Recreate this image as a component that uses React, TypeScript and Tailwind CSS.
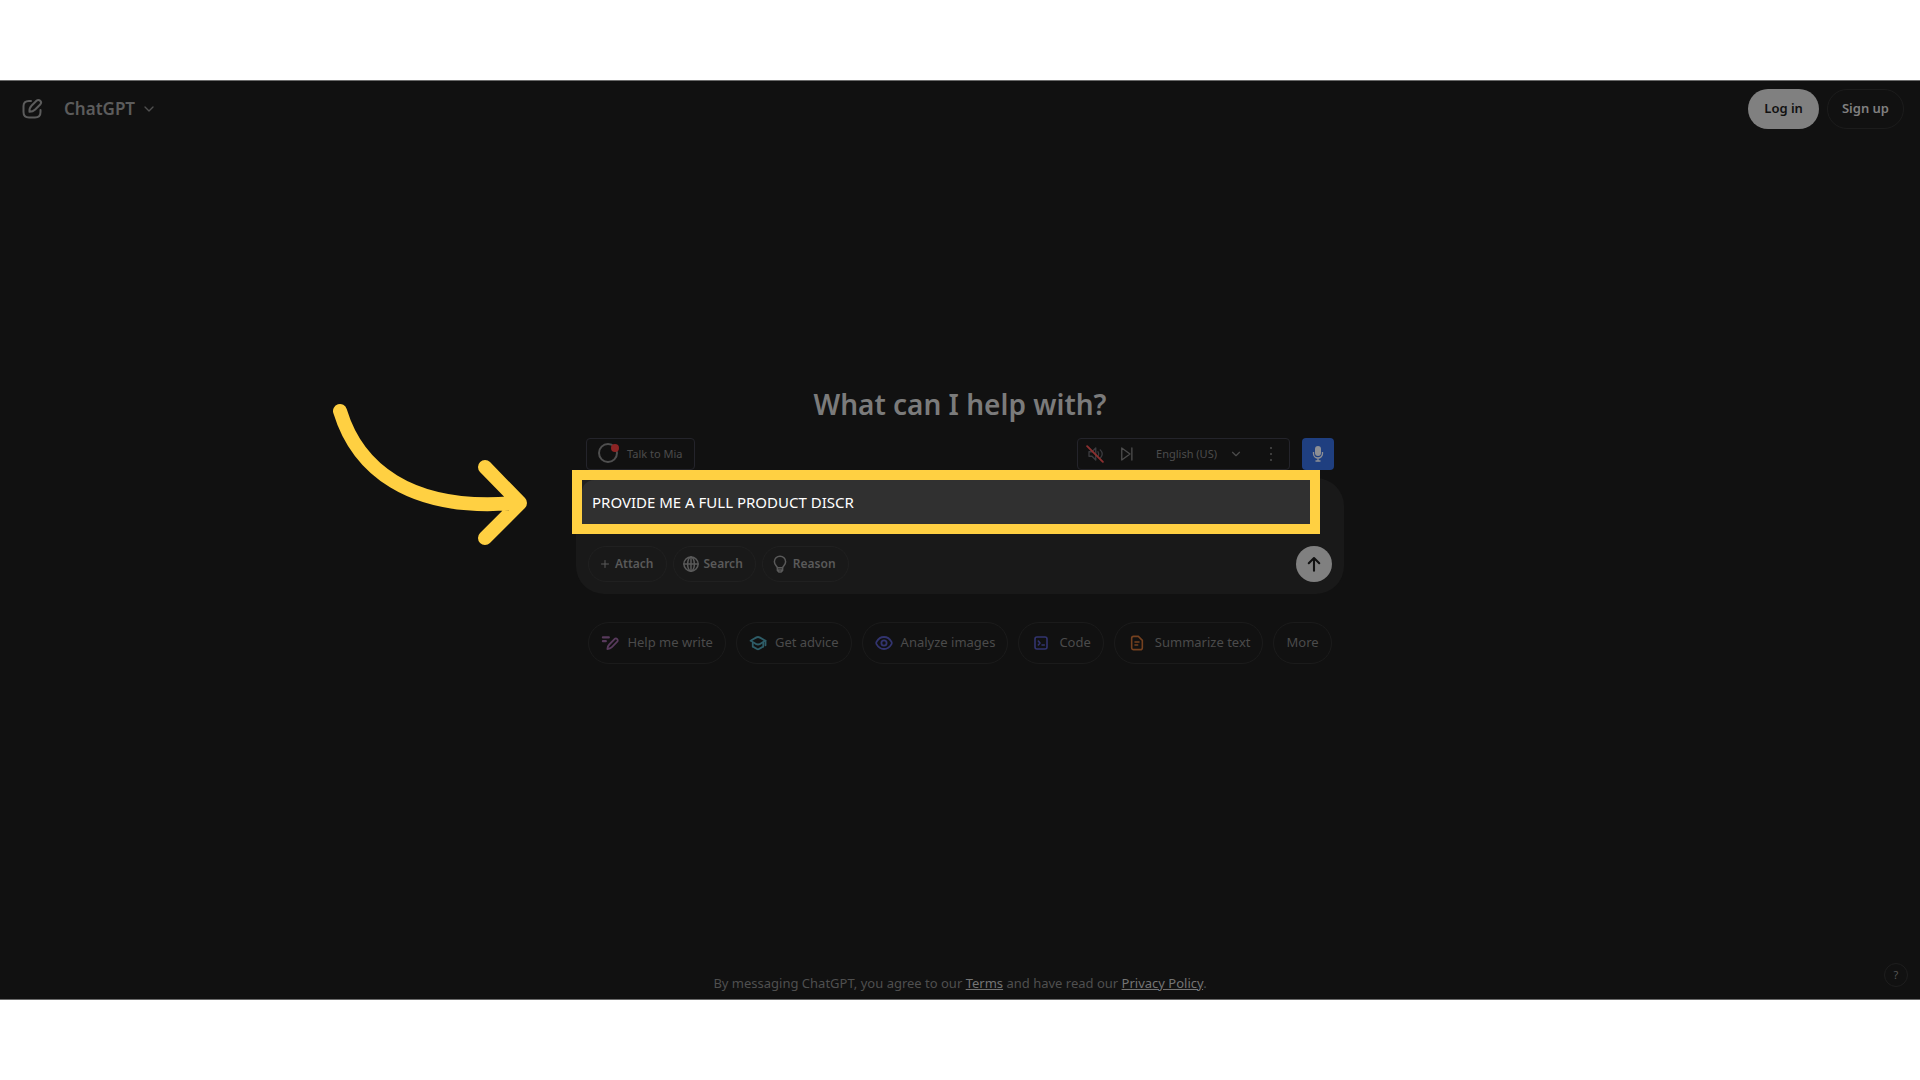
import type { ReactNode } from "react";
import { ChevronDown, Plus } from "lucide-react";

function Icon({ children, className, width = 2 }: { children: ReactNode; className: string; width?: number }) {
  return (
    <svg
      viewBox="0 0 24 24"
      fill="none"
      stroke="currentColor"
      strokeWidth={width}
      strokeLinecap="round"
      strokeLinejoin="round"
      aria-hidden="true"
      className={`shrink-0 ${className}`}
    >
      {children}
    </svg>
  );
}

function Header() {
  return (
    <header className="flex items-center justify-between pt-2 pr-4 pl-5">
      <div className="flex items-center gap-5">
        <button type="button" aria-label="New chat" className="text-[#5c5c5c]">
          <Icon className="size-6">
            <path d="M11 4H9C5 4 3.5 5.500 3.500 9v6c0 4 1.500 5.500 5.500 5.500h6c4 0 5.500-1.500 5.500-5.500v-2" />
            <path d="M9.500 14.800c-.3-2.600.3-4.300 2-6l5-5a2.600 2.600 0 0 1 3.700 3.700l-5 5c-1.700 1.700-3.200 2.300-5.700 2.300z" />
          </Icon>
        </button>
        <button type="button" className="flex items-center gap-1.5 text-[17px] leading-6 font-semibold text-[#5c5c5c]">
          ChatGPT
          <ChevronDown className="size-4 text-[#505050]" />
        </button>
      </div>
      <div className="flex gap-2">
        <button type="button" className="h-10 rounded-full bg-[#808080] px-4 text-[13px] font-semibold text-[#111]">
          Log in
        </button>
        <button type="button" className="h-10 rounded-full border border-[#1c1c1c] px-3.5 text-[13px] font-semibold text-[#808080]">
          Sign up
        </button>
      </div>
    </header>
  );
}

function VoiceBar() {
  return (
    <div className="flex h-8 items-stretch px-2.5 text-[12px] text-[#4c4c4c]">
      <button type="button" className="flex items-center gap-1.5 rounded border border-[#24242b] pr-3 pl-2.5 text-[11px]">
        <svg viewBox="0 0 24 24" className="size-6" fill="none" aria-hidden="true">
          <circle cx="11" cy="11" r="9" stroke="#4f4f4f" strokeWidth="2" />
          <circle cx="18" cy="6" r="4" fill="#8c2424" />
        </svg>
        Talk to Mia
      </button>
      <div className="ml-auto flex items-center rounded border border-[#24242b] pr-2.5 pl-2">
        <button type="button" aria-label="Unmute voice" className="text-[#3c3c40]">
          <Icon className="size-[18px]" width={1.8}>
            <path d="M4 9v6h4l5 5V4L8 9z M16 9c1.300 2 1.300 4 0 6 M19 6.500c3.500 3.500 3.500 7.500 0 11" />
            <path d="M1.500 1.500 22.500 22.500" stroke="#8c3030" strokeWidth="2.500" />
          </Icon>
        </button>
        <button type="button" aria-label="Skip" className="ml-3.5">
          <Icon className="size-[18px]" width={1.8}>
            <path d="M5 4v16l11-8z M18.500 4v16" />
          </Icon>
        </button>
        <button type="button" className="ml-5 flex items-center gap-3 text-[11px]">
          English (US)
          <ChevronDown className="size-3.5" />
        </button>
        <button type="button" aria-label="More voice options" className="ml-5">
          <svg viewBox="0 0 16 16" className="size-4" fill="currentColor" aria-hidden="true">
            <circle cx="8" cy="2" r="1" />
            <circle cx="8" cy="8" r="1" />
            <circle cx="8" cy="14" r="1" />
          </svg>
        </button>
      </div>
      <button type="button" aria-label="Record" className="ml-3 flex w-8 items-center justify-center rounded bg-[#1f3f80] text-[#8d8f94]">
        <svg viewBox="0 0 16 16" className="size-4" fill="currentColor" aria-hidden="true">
          <rect x="5" y="0" width="6" height="10" rx="3" />
          <path d="M3.500 6v1.500a4.500 4.500 0 0 0 9 0V6M8 12v3M5.500 15h5" fill="none" stroke="currentColor" strokeWidth="1.300" />
        </svg>
      </button>
    </div>
  );
}

function Tool({ icon, label, className }: { icon: ReactNode; label: string; className: string }) {
  return (
    <button
      type="button"
      className={`flex h-9 items-center rounded-full border border-[#202020] text-[12px] font-semibold text-[#5a5a5a] ${className}`}
    >
      {icon}
      {label}
    </button>
  );
}

function Composer() {
  return (
    <form className="relative mt-2 rounded-[28px] bg-[#191919] px-3 pt-17 pb-3" onSubmit={(e) => e.preventDefault()}>
      <div className="absolute -top-2 right-6 -left-1 h-16 border-10 border-[#ffd042] bg-[#212121]">
        <input
          aria-label="Message ChatGPT"
          defaultValue="PROVIDE ME A FULL PRODUCT DISCR"
          className="size-full rounded-tl-xl bg-[#303030] px-2.5 text-[15px] text-white outline-none"
        />
      </div>
      <div className="flex items-center gap-1.5">
        <Tool label="Attach" className="gap-1 pr-3 pl-2.5" icon={<Plus className="size-3" />} />
        <Tool
          label="Search"
          className="gap-1 pr-3 pl-2"
          icon={
            <Icon className="size-[18px]">
              <circle cx="12" cy="12" r="9.500" />
              <ellipse cx="12" cy="12" rx="4.500" ry="9.500" />
              <path d="M2.500 12h19M12 2.500v19" />
            </Icon>
          }
        />
        <Tool
          label="Reason"
          className="gap-1 pr-3 pl-2"
          icon={
            <Icon className="size-[18px]">
              <path d="M8.500 17c0-2-4-3.500-4-8a7.500 7.500 0 0 1 15 0c0 4.500-4 6-4 8z" />
              <path d="M8.500 17v3.500l2 2h3l2-2V17M9 20h6" />
            </Icon>
          }
        />
        <button type="submit" aria-label="Send" className="ml-auto flex size-9 items-center justify-center rounded-full bg-[#808080] text-[#111]">
          <Icon className="size-[18px]" width={2.8}>
            <path d="M12 21V4M5 11l7-7 7 7" />
          </Icon>
        </button>
      </div>
    </form>
  );
}

const suggestions = [
  {
    label: "Help me write",
    icon: (
      <Icon className="size-[18px] text-[#583a5c]" width={2.4}>
        <path d="M2.500 4.500h8M2.500 9.500h4" strokeWidth="2.800" />
        <path d="M8.500 20c.2-3 .8-4.300 2.500-6l7-7.300a2.500 2.500 0 0 1 3.600 3.600L14.500 17.500C12.800 19.200 11.400 19.800 8.500 20z" />
      </Icon>
    ),
  },
  {
    label: "Get advice",
    icon: (
      <Icon className="size-[18px] text-[#2e5d68]" width={2.4}>
        <path d="M2 9c3-1 7-5 10-5s7 4 10 5c-3 1-7 5-10 5S5 10 2 9z" />
        <path d="M5 11.500V17c2.500.3 4.500 3.500 7 3.500s4.500-3.200 7-3.500v-5.500M22 9v6" />
      </Icon>
    ),
  },
  {
    label: "Analyze images",
    icon: (
      <Icon className="size-[18px] text-[#32346f]" width={2.4}>
        <path d="M12 4c5 0 8 3 10 6.500q.7 1.500 0 3c-2 3.500-5 6.500-10 6.500s-8-3-10-6.500q-.7-1.500 0-3C4 7 7 4 12 4z" />
        <circle cx="12" cy="12" r="3.500" />
      </Icon>
    ),
  },
  {
    label: "Code",
    icon: (
      <Icon className="mx-0.5 size-4 text-[#32346f]" width={2.4}>
        <rect x="3" y="3" width="18" height="18" rx="3" />
        <path d="m8 9 2.500 3L8 15M13.500 15H17" />
      </Icon>
    ),
  },
  {
    label: "Summarize text",
    icon: (
      <Icon className="mx-0.5 size-4 text-[#75411f]" width={2.4}>
        <path d="M7 2h7l6 6v11a3 3 0 0 1-3 3H7a3 3 0 0 1-3-3V5a3 3 0 0 1 3-3zM9 10.500h6M9 15h4" />
      </Icon>
    ),
  },
  { label: "More", icon: null },
];

export default function App() {
  return (
    <div className="flex min-h-screen flex-col bg-white py-20 font-['Noto_Sans',sans-serif]">
      <div className="flex flex-1 flex-col border-y border-[#6b6b6b] bg-[#111]">
        <Header />
        <main className="mx-auto w-full max-w-[768px] flex-1 pt-[255px]">
          <h1 className="text-center text-[28px] leading-10 font-semibold text-[#7b7b7b]">What can I help with?</h1>
          <div className="relative mt-3.5">
            <VoiceBar />
            <Composer />
            <svg
              viewBox="0 0 200 144"
              className="absolute -top-9 right-full mr-12 w-[200px]"
              fill="none"
              stroke="#ffd042"
              strokeWidth="14"
              strokeLinecap="round"
              strokeLinejoin="round"
              aria-hidden="true"
            >
              <path d="M12 9C29 65 80 110 186 101M157 65l35 36-35 35" />
            </svg>
          </div>
          <div className="mt-7 flex justify-center gap-2.5">
            {suggestions.map(({ label, icon }) => (
              <button
                key={label}
                type="button"
                className="flex h-[42px] items-center gap-2 rounded-full border border-[#1b1b1b] px-3 text-[13px] whitespace-nowrap text-[#4b4b4b]"
              >
                {icon}
                {label}
              </button>
            ))}
          </div>
        </main>
        <footer className="relative pb-1 text-center text-[13px] leading-6 text-[#4f4f4f]">
          By messaging ChatGPT, you agree to our{" "}
          <a href="#terms" className="text-[#747474] underline">
            Terms
          </a>{" "}
          and have read our{" "}
          <a href="#privacy" className="text-[#747474] underline">
            Privacy Policy
          </a>
          .
          <button
            type="button"
            aria-label="Help"
            className="absolute right-3 bottom-3 size-6 rounded-full border border-[#1e1e1e] text-[11px] leading-5 text-[#555]"
          >
            ?
          </button>
        </footer>
      </div>
    </div>
  );
}
